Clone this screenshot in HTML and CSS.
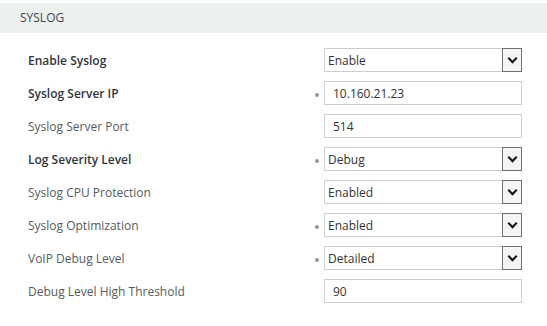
FILE: index.html
```html
<!DOCTYPE html>
<html lang="en">
<head>
    <meta charset="UTF-8">
    <meta name="viewport" content="width=device-width, initial-scale=1.0">
    <title>Syslog</title>
    <link rel="stylesheet" href="styles.css">
</head>
<body>
    <div class="panel-head">SYSLOG</div>
    <form class="syslog-frm">
        <div class="row">
            <label class="strong">Enable Syslog</label>
            <span class="mark"></span>
            <div class="select"><select><option>Enable</option></select><span class="arrow"></span></div>
        </div>
        <div class="row">
            <label class="strong">Syslog Server IP</label>
            <span class="mark on"></span>
            <input type="text" value="10.160.21.23">
        </div>
        <div class="row">
            <label>Syslog Server Port</label>
            <span class="mark"></span>
            <input type="text" value="514">
        </div>
        <div class="row">
            <label class="strong">Log Severity Level</label>
            <span class="mark on"></span>
            <div class="select"><select><option>Debug</option></select><span class="arrow"></span></div>
        </div>
        <div class="row">
            <label>Syslog CPU Protection</label>
            <span class="mark"></span>
            <div class="select"><select><option>Enabled</option></select><span class="arrow"></span></div>
        </div>
        <div class="row">
            <label>Syslog Optimization</label>
            <span class="mark on"></span>
            <div class="select"><select><option>Enabled</option></select><span class="arrow"></span></div>
        </div>
        <div class="row">
            <label>VoIP Debug Level</label>
            <span class="mark on"></span>
            <div class="select"><select><option>Detailed</option></select><span class="arrow"></span></div>
        </div>
        <div class="row">
            <label>Debug Level High Threshold</label>
            <span class="mark"></span>
            <input type="text" value="90">
        </div>
    </form>
</body>
</html>
```

FILE: styles.css
```css
body {margin: 0; font-family: "Open Sans", "DejaVu Sans", sans-serif; font-size: 12px; color: #555; background: #fff;}
.panel-head {margin-top: 3px; height: 30px; line-height: 30px; padding-left: 20px; background: #edf1ee; color: #3f4650; font-size: 12px;}
.syslog-frm {padding: 15px 0 0 28px;}
.syslog-frm .row {display: grid; grid-template-columns: 287px 9px 198px; align-items: center; height: 24px; margin-bottom: 9px;}
.syslog-frm label {color: #555b62;}
.syslog-frm label.strong {font-weight: 600; color: #2f3640;}
.syslog-frm .mark {justify-self: start; width: 4px; height: 4px; margin-top: 4px; border-radius: 50%;}
.syslog-frm .mark.on {background: #8d99a6;}
.syslog-frm input {box-sizing: border-box; width: 198px; height: 24px; margin: 0; padding: 0 8px; border: 1px solid #c9cfd4; font: inherit; color: #333; outline: none;}
.syslog-frm .select {display: flex; box-sizing: border-box; width: 198px; height: 24px; border: 1px solid #c9cfd4;}
.syslog-frm select {flex: 1; appearance: none; border: none; margin: 0; padding: 0 3px; font: inherit; color: #333; background: #fff; outline: none;}
.syslog-frm .arrow {position: relative; box-sizing: border-box; width: 20px; margin: -1px -1px -1px 0; border: 1px solid #707070; background: #f4f4f4;}
.syslog-frm .arrow::after {content: ""; position: absolute; left: 6px; top: 6px; width: 5px; height: 5px; border-right: 2px solid #111; border-bottom: 2px solid #111; transform: rotate(45deg);}
```
